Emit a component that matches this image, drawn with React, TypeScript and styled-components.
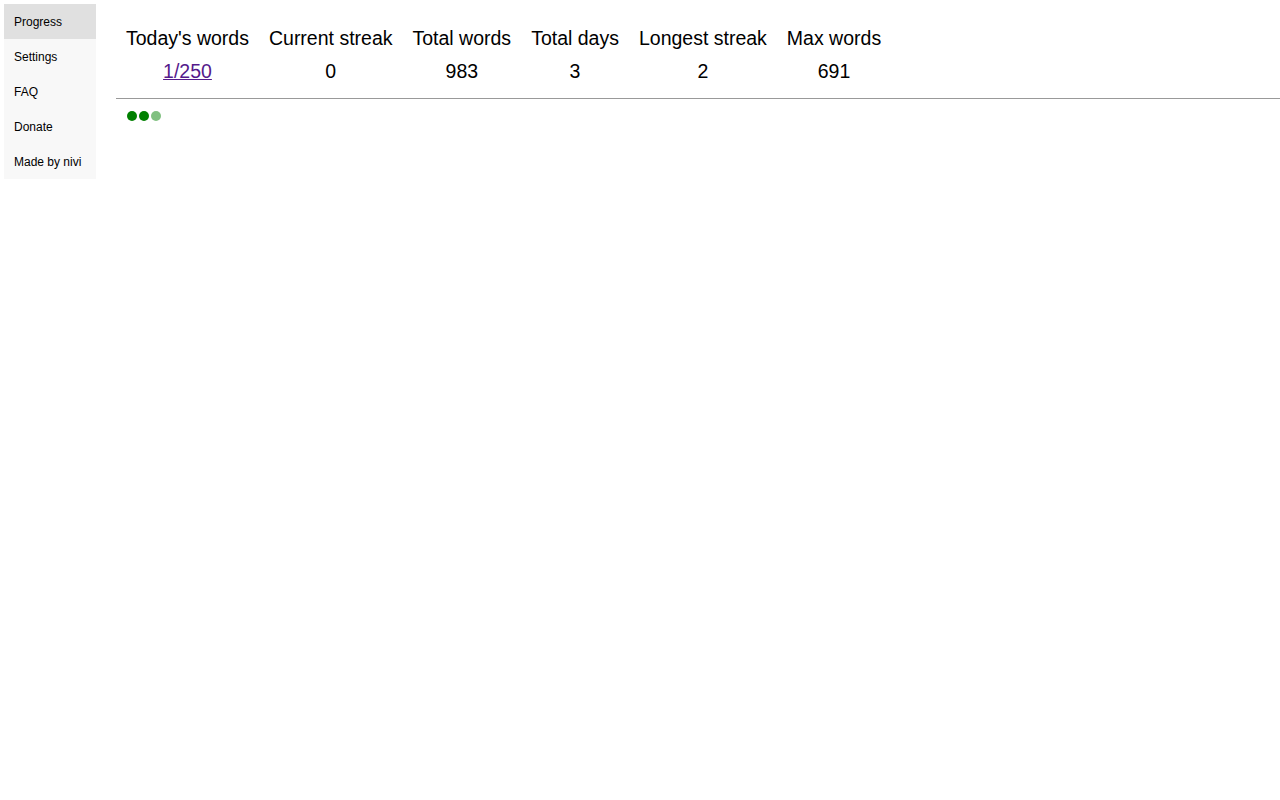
import React from 'react'
import styled, { createGlobalStyle } from 'styled-components'

const GlobalStyle = createGlobalStyle`
  body {
    margin: 4px 0 4px 4px;
    font-family: 'Liberation Sans', Arial, sans-serif;
    color: #000;
    background: #fff;
  }
`

const Layout = styled.div`
  display: flex;
  align-items: flex-start;
`

const Sidebar = styled.nav`
  display: flex;
  flex-direction: column;
  width: 92px;
  background: #f8f8f8;
`

const NavItem = styled.a<{ $active?: boolean }>`
  display: flex;
  align-items: center;
  height: 35px;
  padding: 0 10px;
  font-size: 12px;
  color: #000;
  text-decoration: none;
  background: ${(p) => (p.$active ? '#e0e0e0' : 'transparent')};
  cursor: pointer;
`

const Main = styled.main`
  flex: 1;
  margin-left: 20px;
  padding-top: 18px;
`

const StatsTable = styled.table`
  border-collapse: collapse;
  font-size: 19.5px;
`

const Cell = styled.td`
  padding: 5px 10px;
  text-align: center;
  white-space: nowrap;
  line-height: 23px;
`

const HeadCell = styled(Cell).attrs({ as: 'th' })`
  font-weight: normal;
`

const TodayLink = styled.a`
  color: #551a8b;
  text-decoration: underline;
`

const Divider = styled.hr`
  margin: 10px 0 0;
  border: none;
  border-top: 1px solid #999;
`

const Dots = styled.div`
  display: flex;
  gap: 2px;
  padding: 12px 0 0 11px;
`

const Dot = styled.span<{ $light?: boolean }>`
  width: 10px;
  height: 10px;
  border-radius: 50%;
  background: ${(p) => (p.$light ? '#80c080' : '#008000')};
`

const nav = ['Progress', 'Settings', 'FAQ', 'Donate', 'Made by nivi']

const stats = [
  { label: "Today's words", value: '1/250', link: true },
  { label: 'Current streak', value: '0' },
  { label: 'Total words', value: '983' },
  { label: 'Total days', value: '3' },
  { label: 'Longest streak', value: '2' },
  { label: 'Max words', value: '691' },
]

const days = [false, false, true]

export default function App() {
  return (
    <>
      <GlobalStyle />
      <Layout>
        <Sidebar>
          {nav.map((item, i) => (
            <NavItem key={item} $active={i === 0}>
              {item}
            </NavItem>
          ))}
        </Sidebar>
        <Main>
          <StatsTable>
            <thead>
              <tr>
                {stats.map((s) => (
                  <HeadCell key={s.label}>{s.label}</HeadCell>
                ))}
              </tr>
            </thead>
            <tbody>
              <tr>
                {stats.map((s) => (
                  <Cell key={s.label}>
                    {s.link ? <TodayLink href="#">{s.value}</TodayLink> : s.value}
                  </Cell>
                ))}
              </tr>
            </tbody>
          </StatsTable>
          <Divider />
          <Dots>
            {days.map((light, i) => (
              <Dot key={i} $light={light} />
            ))}
          </Dots>
        </Main>
      </Layout>
    </>
  )
}
